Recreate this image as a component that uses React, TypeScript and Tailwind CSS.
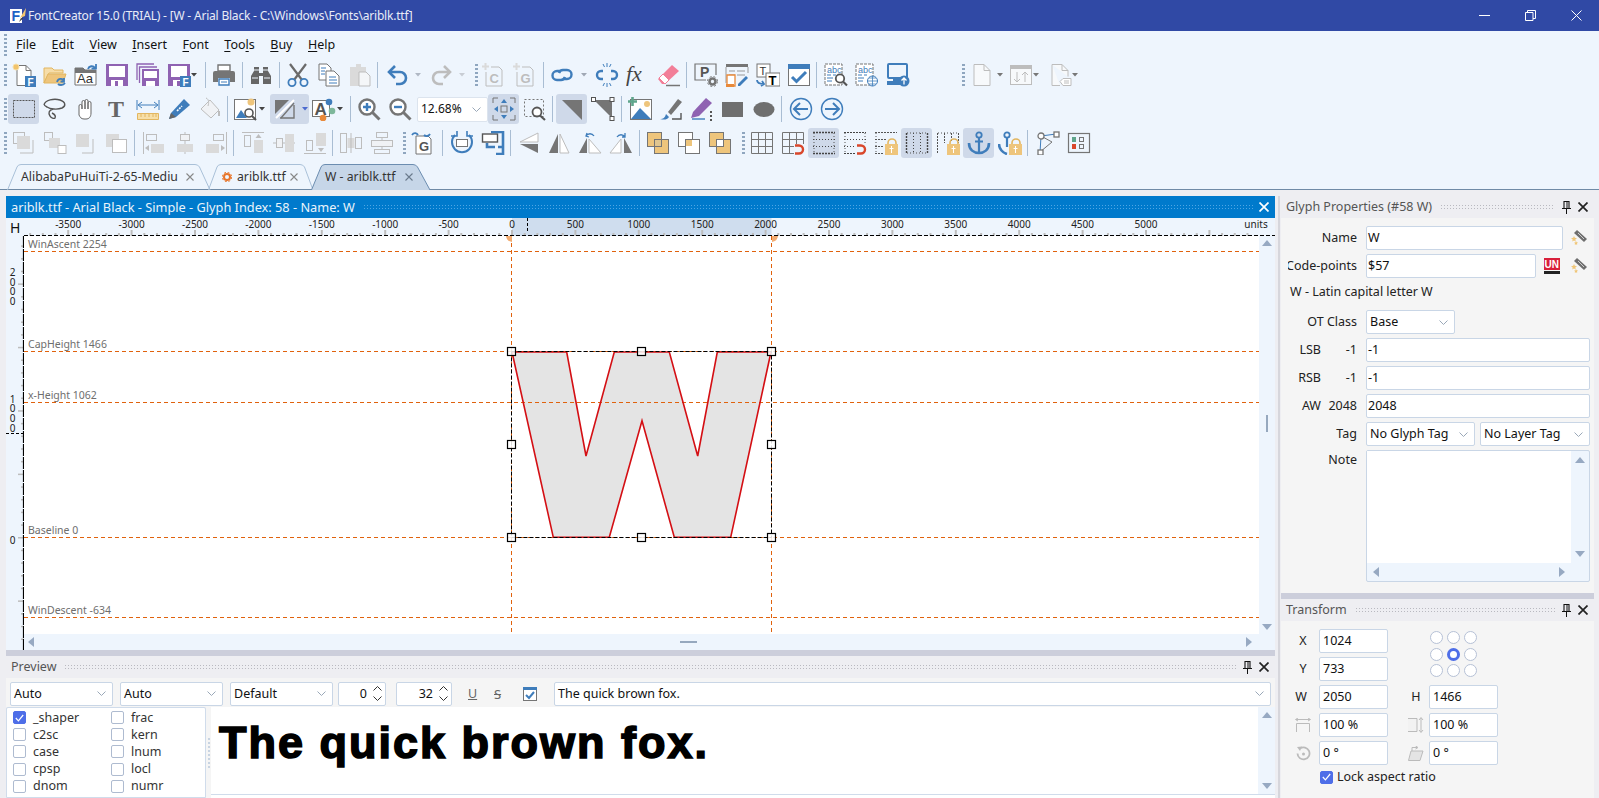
import type { ReactNode } from "react";

const G = "#757575";
const B = "#3F7DBB";
const P = "#8F62B2";
const Y = "#EEC57C";
const D = "#DADADA";
const S = "#BDBDBD";
const RADIOS = [1, 2, 3, 4, 5, 6, 7, 8, 9];

function Ico({ children, w = 24 }: { children: ReactNode; w?: number }) {
  return (
    <svg width={w} height={24} viewBox={`0 0 ${w} 24`} fill="none" className="shrink-0">
      {children}
    </svg>
  );
}

function Btn({ active, children }: { active?: boolean; children: ReactNode }) {
  return (
    <div
      className={`w-[31px] h-[30px] shrink-0 flex items-center justify-center rounded-[3px] ${
        active ? "bg-[#CFD9E9]" : ""
      }`}
    >
      {children}
    </div>
  );
}

function Sep({ className }: { className: string }) {
  return <div className={`w-px h-[26px] shrink-0 bg-[#A9BDD3] ${className}`} />;
}

function Caret({ className = "", color = "#444" }: { className?: string; color?: string }) {
  return (
    <svg width={6} height={4} viewBox="0 0 6 4" className={`shrink-0 ${className}`}>
      <path d="M0 0h6L3 3.5z" fill={color} />
    </svg>
  );
}

function Grip({ className = "" }: { className?: string }) {
  return (
    <div className={`w-[3px] h-[22px] shrink-0 bg-[repeating-linear-gradient(to_bottom,#8FA6BF_0_2px,transparent_2px_4px)] ${className}`} />
  );
}

const txt = { fontFamily: "'Liberation Sans', sans-serif" };

/* row 1 icons */
const NewFont = (
  <Ico>
    <path d="M5 2.5h9l5 5v15H5z" fill="#fff" stroke={G} />
    <path d="M14 2.5v5h5" stroke={G} />
    <circle cx="4" cy="4" r="3" fill="#F1C36C" stroke="#F7DFA8" />
    <rect x="13" y="13" width="11" height="11" fill={B} />
    <text x="15.5" y="22.5" fontSize="10" fontWeight="700" fill="#fff" style={txt}>F</text>
  </Ico>
);
const OpenFolder = (
  <Ico>
    <path d="M1 5h8l2 2h9v3H6L1 20z" fill="#F6DDA9" stroke="#E2B660" />
    <path d="M1 20l4-9h18l-3 9z" fill={Y} stroke="#E2B660" />
    <path d="M14 19c1-4 6-4 7-1M21 15v3.5h-3.5M22 20c-2 3-6 2-7 1" stroke={B} strokeWidth="1.8" />
  </Ico>
);
const AaFolder = (
  <Ico>
    <path d="M1 5h8l2 2h11v15H1z" fill="#fff" stroke={G} />
    <path d="M1 5h8l2 2h11v3H1z" fill={G} />
    <text x="3" y="20" fontSize="13" fill="#333" style={txt}>Aa</text>
    <path d="M14 6c1-3 5-4 7-1M22 1v4.5h-4.5" stroke={B} strokeWidth="1.8" />
  </Ico>
);
const SaveShape = (
  <>
    <rect x="1" y="1" width="22" height="22" fill={P} />
    <rect x="4" y="3" width="16" height="11" fill="#fff" />
    <rect x="6" y="17" width="12" height="6" fill="#fff" />
    <rect x="10" y="18" width="3" height="5" fill={P} />
  </>
);
const Save = <Ico>{SaveShape}</Ico>;
const SaveAll = (
  <Ico>
    <path d="M1 17V1h17M3.5 20V4H21" stroke={P} strokeWidth="1.3" />
    <rect x="6" y="6" width="17" height="17" fill={P} />
    <rect x="8" y="8" width="13" height="7" fill="#fff" />
    <rect x="10" y="18" width="9" height="5" fill="#fff" />
  </Ico>
);
const SaveFont = (
  <Ico>
    {SaveShape}
    <rect x="13" y="13" width="11" height="11" fill={B} />
    <text x="15.5" y="22.5" fontSize="10" fontWeight="700" fill="#fff" style={txt}>F</text>
  </Ico>
);
const Printer = (
  <Ico>
    <path d="M6 2h12v6H6z" fill="#fff" stroke={G} strokeWidth="1.4" />
    <path d="M1 10a2 2 0 0 1 2-2h18a2 2 0 0 1 2 2v9h-5v-4H6v4H1z" fill={G} />
    <path d="M7 16h10v6H7z" fill="#fff" stroke={B} strokeWidth="1.4" />
    <path d="M9 19h6" stroke={B} />
  </Ico>
);
const Binoculars = (
  <Ico>
    <path d="M2 21v-8l3-5V4h5v6h4V4h5v4l3 5v8h-8v-8h-4v8z" fill="#666" />
    <path d="M5 7h5M14 7h5M3 15h6M15 15h6" stroke="#EEF5FD" />
  </Ico>
);
const Cut = (
  <Ico>
    <path d="M4 1l12 16M20 1L8 17" stroke="#6A6A6A" strokeWidth="2.2" />
    <circle cx="6" cy="19.5" r="3.6" stroke={B} strokeWidth="1.8" />
    <circle cx="18" cy="19.5" r="3.6" stroke={B} strokeWidth="1.8" />
  </Ico>
);
const Copy = (
  <Ico>
    <path d="M2 1h8l4 4v12H2z" fill="#fff" stroke={G} />
    <path d="M9 8h8l5 5v10H9z" fill="#fff" stroke={G} />
    <path d="M4 5h5M4 8h4M4 11h4M12 14h7M12 17h8M12 20h8" stroke={B} />
  </Ico>
);
const Paste = (
  <Ico>
    <path d="M2 4h6V1h5v3h5v6h-7v13H2z" fill={D} />
    <path d="M11 9h7l4 4v10H11z" fill="#F4F6F8" stroke={S} />
  </Ico>
);
const Undo = (
  <Ico>
    <path d="M9 3L3 9l6 6" stroke={B} strokeWidth="2.6" />
    <path d="M3 9h11a6 6 0 0 1 6 6v0a6 6 0 0 1-6 6h-4" stroke={B} strokeWidth="2.6" />
  </Ico>
);
const Redo = (
  <Ico>
    <path d="M15 3l6 6-6 6" stroke={S} strokeWidth="2.6" />
    <path d="M21 9H10a6 6 0 0 0-6 6v0a6 6 0 0 0 6 6h4" stroke={S} strokeWidth="2.6" />
  </Ico>
);
const GlyphBox = ({ letter }: { letter: string }) => (
  <Ico>
    <path d="M1 3.5h7M4.5 0v7" stroke={D} strokeWidth="2" />
    <path d="M10 4h8l3 3v16H5V9" stroke={S} />
    <text x="8.5" y="20" fontSize="13" fontWeight="700" fill={S} style={txt}>{letter}</text>
  </Ico>
);
const LinkI = (
  <Ico>
    <path d="M11 8H7a4.5 4.5 0 0 0 0 9h4a4.5 4.5 0 0 0 4-3" stroke={B} strokeWidth="2.4" />
    <path d="M13 16h4a4.5 4.5 0 0 0 0-9h-4a4.5 4.5 0 0 0-4 3" stroke={B} strokeWidth="2.4" />
  </Ico>
);
const Unlink = (
  <Ico>
    <path d="M8 8H6a4 4 0 0 0 0 8h2M16 8h2a4 4 0 0 1 0 8h-2" stroke={B} strokeWidth="2.4" />
    <path d="M8 1l1.5 3M12 0v4M16 1l-1.5 3M8 23l1.5-3M12 24v-4M16 23l-1.5-3" stroke={B} />
  </Ico>
);
const Fx = (
  <Ico>
    <text x="0" y="18" fontSize="22" fontStyle="italic" fill="#444" style={{ fontFamily: "'Liberation Serif', serif" }}>fx</text>
  </Ico>
);
const Eraser = (
  <Ico>
    <path d="M1 16L15 2l7 6-14 13H5z" fill="#F27E98" />
    <path d="M2 15l6 6 4-4-6-6z" fill="#fff" stroke="#F27E98" />
    <path d="M9 22.5h14" stroke={G} strokeWidth="1.5" />
  </Ico>
);
const PGear = (
  <Ico>
    <path d="M12 17H1V1h21v11" stroke={G} strokeWidth="1.2" />
    <text x="6" y="14" fontSize="14" fontWeight="700" fill="#555" style={txt}>P</text>
    <circle cx="18.5" cy="18.5" r="3" stroke={G} strokeWidth="2.6" />
    <circle cx="18.5" cy="18.5" r="5" stroke={G} strokeDasharray="2 2" />
  </Ico>
);
const TableEdit = (
  <Ico>
    <rect x="1" y="1" width="22" height="3" fill={G} />
    <path d="M1 4v16M23 4v6M4 8h6M12 8h8M4 12h6M12 12h8" stroke="#999" />
    <path d="M2 12h8v11H2z" fill="#fff" stroke="#E8893A" strokeWidth="1.3" />
    <path d="M1 21h8v3H1z" fill="#E8893A" />
    <path d="M13 21l8-8 2 2-8 8h-2z" fill={B} />
  </Ico>
);
const TSwap = (
  <Ico>
    <rect x="1" y="1" width="13" height="13" fill="#fff" stroke={G} />
    <text x="3.5" y="12" fontSize="11" fill="#333" style={txt}>T</text>
    <rect x="10" y="10" width="14" height="13" fill="#fff" stroke={G} />
    <text x="12.5" y="21.5" fontSize="13" fontWeight="700" fill="#000" style={txt}>T</text>
    <path d="M1 17c0 3 2 4 7 4M6 18l2 3-3 2" stroke={B} strokeWidth="1.8" />
  </Ico>
);
const CheckWin = (
  <Ico>
    <rect x="1.5" y="1.5" width="21" height="21" fill="#fff" stroke={G} />
    <rect x="1" y="1" width="22" height="5" fill={B} />
    <path d="M5 14l4.5 4.5L19 9" stroke={B} strokeWidth="3" />
  </Ico>
);
const AbcSearch = (
  <Ico>
    <path d="M1 1h17v21H1z" fill="#fff" stroke={G} strokeDasharray="3 1" />
    <text x="3" y="9.5" fontSize="9" fill={B} style={txt}>abc</text>
    <path d="M3 12h4M3 15h6M3 18h5M9 12h3" stroke={B} />
    <circle cx="16" cy="15.5" r="4.2" fill="#fff" stroke="#555" strokeWidth="1.8" />
    <path d="M19 18.5l4 4" stroke="#555" strokeWidth="2.2" />
  </Ico>
);
const AbcGlobe = (
  <Ico>
    <path d="M1 1h17v21H1z" fill="#fff" stroke={G} strokeDasharray="3 1" />
    <text x="3" y="9.5" fontSize="9" fill={B} style={txt}>abc</text>
    <path d="M3 12h4M3 15h6M3 18h5M9 12h3" stroke={B} />
    <circle cx="17.5" cy="18" r="5" fill="#fff" stroke={B} />
    <path d="M12.5 18h10M17.5 13v10M14 15h7M14 21h7" stroke={B} strokeWidth=".8" />
  </Ico>
);
const Monitor = (
  <Ico>
    <rect x="2" y="1" width="19" height="14" rx="1" stroke={B} strokeWidth="2" />
    <path d="M1 18h13v4H1z" fill={B} />
    <path d="M7 15h6v3H7z" fill={B} />
    <circle cx="18" cy="18" r="5.5" fill={B} />
    <path d="M18 21.5V15M15.5 17.5l2.5-2.5 2.5 2.5" stroke="#fff" strokeWidth="1.3" />
  </Ico>
);
const PageD = (
  <Ico>
    <path d="M4 1.5h10l6 6v15H4z" fill="#F7F9FB" stroke={S} />
    <path d="M14 1.5v6h6" stroke={S} />
  </Ico>
);
const UpDown = (
  <Ico>
    <rect x="1.5" y="2.5" width="21" height="19" fill="#F7F9FB" stroke={S} />
    <rect x="1" y="2" width="22" height="4" fill={S} />
    <path d="M8 9v10M5 16l3 3 3-3M16 19V9M13 12l3-3 3 3" stroke={S} />
  </Ico>
);
const PageTag = (
  <Ico>
    <path d="M4 1.5h10l6 6v6M4 1.5v21h8" fill="#F7F9FB" stroke={S} />
    <path d="M14 1.5v6h6" stroke={S} />
    <path d="M12 18.5l3-3h8v7h-8z" fill="#fff" stroke={S} />
    <path d="M16 18h5M16 20h5" stroke={S} />
  </Ico>
);

/* row 2 icons */
const SelectRect = (
  <Ico>
    <rect x="1.5" y="3.5" width="21" height="17" stroke="#555" strokeDasharray="2 1" />
  </Ico>
);
const Lasso = (
  <Ico>
    <path d="M1 8C2 3 11 1 17 3c6 2 6 6 2 8-5 2-12 1-15-1-2-1-3-2-3-3M10 12c-4 1-5 4-3 7 1 2 4 3 5 2 1-2-1-4-3-5" stroke="#555" strokeWidth="1.4" />
  </Ico>
);
const Hand = (
  <Ico>
    <path d="M5 14V9a1.5 1.5 0 0 1 3 0v3V5a1.5 1.5 0 0 1 3 0v7V4a1.5 1.5 0 0 1 3 0v8V6a1.5 1.5 0 0 1 3 0v10c0 4-2 6-5 6H10c-3 0-4-2-5-4z" fill="#fff" stroke="#666" />
  </Ico>
);
const TextT = (
  <Ico>
    <text x="3" y="20" fontSize="24" fontWeight="700" fill="#666" style={{ fontFamily: "'Liberation Serif', serif" }}>T</text>
  </Ico>
);
const Measure = (
  <Ico>
    <path d="M1 3v10M23 3v10" stroke={B} />
    <path d="M3 8h18M6 5L2 8l4 3M18 5l4 3-4 3" stroke={B} />
    <path d="M1.5 16.5h21v6h-21z" fill="#F7DFA8" stroke="#E2B660" />
    <path d="M5 17v3M9 17v3M13 17v3M17 17v3M20 17v3" stroke="#E2B660" />
  </Ico>
);
const Pencil = (
  <Ico>
    <path d="M2 22l2-6L17 2l6 6L9 20z" fill={B} />
    <path d="M2 22l2-6 5 4z" fill="#666" />
    <path d="M10 14l5-5" stroke="#fff" strokeWidth="1.6" strokeDasharray="2 1" />
  </Ico>
);
const Bucket = (
  <Ico>
    <path d="M3 12L12 3l9 10-8 8z" fill="#F0F2F5" stroke={S} />
    <path d="M8 1c3 1 3 5 2 8" stroke={S} />
    <path d="M21 14v5" stroke={S} strokeWidth="2" />
  </Ico>
);
const ImgSearch = (
  <Ico>
    <rect x=".5" y="2.5" width="21" height="20" fill="#fff" stroke={G} />
    <circle cx="17" cy="5" r="3.5" fill={Y} />
    <path d="M2 21l5-8 6 8z" fill={B} />
    <circle cx="15" cy="16" r="4" fill="#fff" stroke="#555" strokeWidth="1.6" />
    <path d="M18 19l4 4" stroke="#555" strokeWidth="2" />
  </Ico>
);
const DiagFill = (
  <Ico>
    <path d="M2 3h14L2 17z" fill={G} />
    <path d="M3 21L21 3" stroke="#fff" strokeWidth="2" />
    <path d="M21 8v13H7" stroke={G} strokeWidth="1.4" />
    <path d="M8 21L21 6" stroke={G} strokeWidth="1.4" />
  </Ico>
);
const ADots = (
  <Ico>
    <rect x=".5" y="3.5" width="17" height="16" fill="#fff" stroke={G} />
    <text x="2.5" y="18" fontSize="17" fontWeight="700" fill="#555" style={txt}>A</text>
    <circle cx="17" cy="5" r="3.3" fill={B} />
    <circle cx="20" cy="14" r="3.3" fill="#7DB79A" />
    <circle cx="11" cy="21" r="3.3" fill="#E8893A" />
  </Ico>
);
const ZoomI = ({ plus }: { plus?: boolean }) => (
  <Ico>
    <circle cx="10" cy="10" r="7.5" fill="#fff" stroke={G} strokeWidth="2.4" />
    <path d="M15.5 15.5l7 7" stroke={G} strokeWidth="3" />
    <path d={plus ? "M6 10h8M10 6v8" : "M6 10h8"} stroke={B} strokeWidth="2.4" />
  </Ico>
);
const ZoomFit = (
  <Ico>
    <path d="M1 6V1h5M18 1h5v5M23 18v5h-5M6 23H1v-5" stroke={G} />
    <rect x="9" y="9" width="6" height="6" stroke={G} />
    <path d="M12 2l3 4H9zM12 22l-3-4h6zM2 12l4-3v6zM22 12l-4 3V9z" fill={B} />
  </Ico>
);
const ZoomSel = (
  <Ico>
    <rect x="1.5" y="2.5" width="19" height="17" stroke="#777" strokeDasharray="2 2" />
    <circle cx="14" cy="15" r="4.5" fill="#fff" stroke="#555" strokeWidth="1.8" />
    <path d="M17 18.5l5 4.5" stroke="#555" strokeWidth="2.2" />
  </Ico>
);
const Tri = (
  <Ico>
    <path d="M2 3h20v20z" fill={G} />
  </Ico>
);
const TriHandles = (
  <Ico>
    <path d="M3 3h18v18z" fill={G} />
    <rect x=".5" y=".5" width="4" height="4" fill="#fff" stroke="#555" />
    <rect x="19" y=".5" width="4" height="4" fill="#fff" stroke="#555" />
    <rect x="19" y="19.5" width="4" height="4" fill="#fff" stroke="#555" />
  </Ico>
);
const ImgPlus = (
  <Ico>
    <rect x="2.5" y="2.5" width="21" height="20" fill="#fff" stroke={G} />
    <path d="M3 22l9-11 11 11z" fill={B} />
    <circle cx="19" cy="7" r="3" fill={Y} />
    <path d="M0 4.5h9M4.5 0v9" stroke="#5FA58B" strokeWidth="2.6" />
  </Ico>
);
const Brush = (
  <Ico>
    <path d="M1 22c3 0 5-1 6-5l3 3c-2 3-5 3-9 2z" fill={B} />
    <path d="M9 15L19 2l4 3-11 13z" fill={G} />
    <path d="M13 22h9v-6" stroke="#555" strokeWidth="1.4" />
  </Ico>
);
const PurplePen = (
  <Ico>
    <path d="M1 21l2-6L16 1l6 5L9 19z" fill={P} />
    <path d="M2 22h13" stroke={B} strokeWidth="1.4" />
    <path d="M20 14h2v2h-2zM20 18h2v2h-2zM20 22h2v2h-2z" fill="#555" />
  </Ico>
);
const RectI = <Ico><rect x="1" y="5" width="21" height="15" fill="#6F6F6F" /></Ico>;
const EllipseI = <Ico><ellipse cx="12" cy="12.5" rx="10.5" ry="7.5" fill="#6F6F6F" /></Ico>;
const CircleArrow = ({ right }: { right?: boolean }) => (
  <Ico>
    <circle cx="12" cy="12" r="10.5" stroke={B} strokeWidth="1.4" />
    <path d={right ? "M5 12h13M13 6l6 6-6 6" : "M19 12H6M11 6l-6 6 6 6"} stroke={B} strokeWidth="2" />
  </Ico>
);

/* row 3 icons */
const Arr1 = <Ico><rect x="1.5" y="1.5" width="11" height="11" stroke={S} /><rect x="5" y="5" width="13" height="13" fill={D} /><path d="M21 9v13H8" stroke={S} /></Ico>;
const Arr2 = <Ico><rect x="1.5" y="1.5" width="8" height="8" stroke={S} /><rect x="6" y="7" width="11" height="10" fill={D} /><rect x="15" y="14.5" width="8" height="8" fill="#fff" stroke={S} /></Ico>;
const Arr3 = <Ico><rect x="2" y="3" width="13" height="13" fill={D} /><path d="M19 8v14H8" stroke={S} /></Ico>;
const Arr4 = <Ico><rect x="1" y="3" width="13" height="13" fill={D} /><rect x="7.5" y="8.5" width="14" height="13" fill="#fff" stroke={S} /></Ico>;
const AlignL = <Ico><path d="M1.5 1v22" stroke={S} /><rect x="4.5" y="3.5" width="10" height="6" stroke={S} /><rect x="9" y="13" width="13" height="9" fill={D} /><path d="M3 17l4-3v6z" fill={S} /></Ico>;
const AlignC = <Ico><path d="M12 1v22" stroke={S} /><rect x="7.5" y="3.5" width="9" height="6" fill="#F0F2F5" stroke={S} /><rect x="4" y="13" width="16" height="8" fill={D} /></Ico>;
const AlignR = <Ico><path d="M22.5 1v22" stroke={S} /><rect x="9.5" y="3.5" width="10" height="6" stroke={S} /><rect x="2" y="13" width="13" height="9" fill={D} /><path d="M21 17l-4-3v6z" fill={S} /></Ico>;
const AlignT = <Ico><path d="M1 1.5h22" stroke={S} /><rect x="3.5" y="4.5" width="6" height="11" stroke={S} /><rect x="13" y="9" width="9" height="13" fill={D} /><path d="M17.5 3l3 4h-6z" fill={S} /></Ico>;
const AlignM = <Ico><path d="M1 12h22" stroke={S} /><rect x="4.5" y="7.5" width="6" height="9" fill="#F0F2F5" stroke={S} /><rect x="13" y="3" width="9" height="18" fill={D} /></Ico>;
const AlignB = <Ico><path d="M1 22.5h22" stroke={S} /><rect x="3.5" y="9.5" width="6" height="10" stroke={S} /><rect x="13" y="2" width="10" height="13" fill={D} /><path d="M18 21l-3-4h6z" fill={S} /></Ico>;
const DistH = <Ico><rect x="1.5" y="2.5" width="6" height="19" stroke={S} /><rect x="8.5" y="7" width="7" height="10" fill={D} /><rect x="16.5" y="6.5" width="6" height="11" stroke={S} /><path d="M12 2v20" stroke={S} /></Ico>;
const DistV = <Ico><rect x="6.5" y="1.5" width="11" height="5" stroke={S} /><rect x="1.5" y="9.5" width="21" height="6" fill="#F0F2F5" stroke={S} /><rect x="4.5" y="18.5" width="15" height="4" stroke={S} /><path d="M12 6v3M12 15v3" stroke={S} /></Ico>;
const GSwap = (
  <Ico>
    <path d="M6 5h12l3 3v15H6z" fill="#fff" stroke={G} />
    <path d="M2 4c2-3 5-2 6 0M14 4c2 2 5 1 6-1" stroke={B} strokeWidth="1.8" />
    <text x="9" y="20" fontSize="13" fontWeight="700" fill="#555" style={txt}>G</text>
  </Ico>
);
const RotateBox = (
  <Ico>
    <path d="M5 4a10 10 0 1 0 14 0" stroke={B} strokeWidth="2" />
    <path d="M1 5h6V0M23 5h-6V0" stroke={B} strokeWidth="1.6" />
    <rect x="6.5" y="8.5" width="11" height="7" fill="#fff" stroke={G} />
  </Ico>
);
const Clamp = (
  <Ico>
    <rect x="1.5" y="3" width="15" height="8" fill="#fff" stroke="#555" strokeWidth="1.4" />
    <path d="M10 1h12v22h-5M17 16h5M6 12v4h8M15 23h7" stroke={B} strokeWidth="2.6" />
  </Ico>
);
const FlipA = <Ico><path d="M22 2L4 11h18z" fill="#fff" stroke={S} /><path d="M22 22L4 13h18z" fill={G} /></Ico>;
const FlipB = <Ico><path d="M11 3v19H2z" fill={G} /><path d="M13 3v19h9z" fill="#fff" stroke={S} /></Ico>;
const FlipC = <Ico><path d="M9 7v15H1z" fill={G} /><path d="M11 8l12 14H11z" fill="#fff" stroke={S} /><path d="M8 5c2-3 6-3 8 0M9 2l-1 3 3 1" stroke={B} strokeWidth="1.3" /></Ico>;
const FlipD = <Ico><path d="M12 8L1 22h11z" fill="#fff" stroke={S} /><path d="M15 7v15h8z" fill={G} /><path d="M8 6c2-3 6-3 8 0M16 2l0 4-3 0" stroke={B} strokeWidth="1.3" /></Ico>;
const Bool = ({ mode }: { mode: number }) => (
  <Ico>
    <rect x="1.5" y="1.5" width="14" height="14" fill={mode === 1 ? "#fff" : Y} stroke={G} />
    <rect x="8.5" y="8.5" width="14" height="14" fill={mode === 1 ? "#fff" : Y} stroke={G} />
    {mode === 1 && <rect x="9" y="9" width="6" height="6" fill={Y} />}
    {mode === 0 && <rect x="8.5" y="8.5" width="7" height="7" fill="#E0C690" stroke={G} />}
    {mode === 2 && <rect x="8.5" y="8.5" width="7" height="7" fill="#fff" stroke={G} />}
  </Ico>
);
const GridLines = "M1.5 1.5h21v21h-21zM8.5 1.5v21M15.5 1.5v21M1.5 8.5h21M1.5 15.5h21";
const Grid = <Ico><path d={GridLines} stroke={G} /></Ico>;
const MagnetRed = (
  <>
    <rect x="13" y="13" width="11" height="11" fill="#EEF5FD" />
    <path d="M14 14.5h4a4 4 0 0 1 0 8h-4" stroke="#D9472B" strokeWidth="2.4" />
  </>
);
const GridMagnet = <Ico><path d={GridLines} stroke={G} />{MagnetRed}</Ico>;
const RowsDash = <Ico><path d="M1 1.5h22M1 22.5h22" stroke="#444" strokeWidth="1.4" strokeDasharray="2 1" /><path d="M1 8.5h22M1 15.5h22" stroke="#444" strokeDasharray="1 2" /><path d="M2 2v20M22 2v20" stroke="#555" strokeDasharray="1 2" /></Ico>;
const RowsMagnet = <Ico><path d="M1 1.5h22M1 22.5h14" stroke="#444" strokeDasharray="2 1" /><path d="M1 8.5h22M1 15.5h14" stroke="#444" strokeDasharray="1 2" /><path d="M2 2v20M22 2v12" stroke="#555" strokeDasharray="1 2" />{MagnetRed}</Ico>;
const Lock = (
  <>
    <path d="M14 14v-2a4 4 0 0 1 8 0v2" stroke="#E2B660" strokeWidth="1.6" />
    <rect x="11" y="13" width="13" height="11" fill={Y} />
    <path d="M17.5 15v7M15.5 17.5h4" stroke="#fff" />
  </>
);
const RowsLock = <Ico><path d="M1 1.5h22M1 8.5h12M1 15.5h9M1 22.5h9" stroke="#555" strokeDasharray="2 1" /><path d="M2 2v20" stroke="#555" strokeDasharray="1 2" />{Lock}</Ico>;
const ColsDash = <Ico><path d="M1.5 2v20M22.5 2v20" stroke="#444" strokeWidth="1.4" strokeDasharray="2 1" /><path d="M8.5 2v20M15.5 2v20" stroke="#444" strokeDasharray="1 2" /><path d="M2 2h20M2 22h20" stroke="#555" strokeDasharray="1 2" /></Ico>;
const ColsLock = <Ico><path d="M1.5 2v20M8.5 2v10M15.5 2v8M22.5 2v10" stroke="#555" strokeDasharray="2 1" /><path d="M2 2h20" stroke="#555" strokeDasharray="1 2" />{Lock}</Ico>;
const Anchor = (
  <Ico>
    <circle cx="12" cy="4" r="2.7" stroke={B} strokeWidth="1.8" />
    <path d="M12 7v15M8 10.5h8" stroke={B} strokeWidth="2.2" />
    <path d="M2 12c0 7 5 10 10 10s10-3 10-10" stroke={B} strokeWidth="2.6" />
  </Ico>
);
const AnchorLock = (
  <Ico>
    <circle cx="9" cy="4" r="2.7" stroke={B} strokeWidth="1.8" />
    <path d="M9 7v9" stroke={B} strokeWidth="2.2" />
    <path d="M1 13c0 5 4 9 8 10" stroke={B} strokeWidth="2.6" />
    {Lock}
  </Ico>
);
const Nodes = (
  <Ico>
    <path d="M5 5l15-2M5 5l-1 17" stroke={B} />
    <path d="M5 5l11 6-12 10" stroke={G} />
    <circle cx="5" cy="5" r="3" fill="#fff" stroke={G} strokeWidth="1.3" />
    <rect x="18" y="1" width="5" height="5" fill="#fff" stroke={G} strokeWidth="1.3" />
    <rect x="2" y="19" width="5" height="5" fill="#fff" stroke={G} strokeWidth="1.3" />
  </Ico>
);
const KernBox = (
  <Ico>
    <rect x="1.5" y="2.5" width="21" height="19" stroke={G} strokeWidth="1.2" />
    <rect x="5" y="6" width="4" height="5" fill="#5FA58B" />
    <rect x="5" y="13" width="4" height="5" fill="#D9472B" />
    <rect x="12.5" y="6.5" width="4" height="4" stroke={G} />
    <rect x="12.5" y="13.5" width="4" height="4" stroke={G} />
  </Ico>
);

const Wand = () => (
  <svg width={16} height={16} viewBox="0 0 16 16" className="shrink-0">
    <path d="M6 0l10 9-3 3L3 3z" fill="#6E6E6E" />
    <path d="M7 3l6 6" stroke="#ccc" />
    <path d="M3 6l.8 1.8L6 8.2 4.3 9.5 4.8 11.5 3 10.4 1.2 11.5 1.7 9.5 0 8.2 2.2 7.8zM5 11l.6 1.3 1.4.2-1 1 .2 1.4L5 14.3 3.8 15l.2-1.4-1-1 1.4-.2z" fill="#F0C678" />
  </svg>
);

const Chevron = ({ color = "#9AA8B8" }: { color?: string }) => (
  <svg width={9} height={5} viewBox="0 0 9 5" className="shrink-0">
    <path d="M.5.5l4 4 4-4" fill="none" stroke={color} />
  </svg>
);

const XIcon = ({ color = "#222", thin }: { color?: string; thin?: boolean }) => (
  <svg width={10} height={10} viewBox="0 0 10 10" className="shrink-0">
    <path d={thin ? "M1.5 1.5l7 7M8.5 1.5l-7 7" : "M.5.5l9 9M9.5.5l-9 9"} stroke={color} strokeWidth={thin ? 1.1 : 1.7} />
  </svg>
);

const Pin = () => (
  <svg width={9} height={13} viewBox="0 0 9 13" className="shrink-0">
    <path d="M2 .5h5v7H2z" fill="none" stroke="#111" strokeWidth="1.1" />
    <path d="M5 1v6" stroke="#111" />
    <path d="M0 7.5h9M4.5 8v5" stroke="#111" />
  </svg>
);

const Tri1 = ({ d }: { d: string }) => (
  <svg width={10} height={10} viewBox="0 0 10 10" className="shrink-0">
    <path d={d} fill="#97A9C2" />
  </svg>
);
const UP = "M5 2l5 6H0z";
const DOWN = "M5 8L0 2h10z";
const LEFT = "M2 5l6-5v10z";
const RIGHT = "M8 5L2 0v10z";

function Dotted({ className, light }: { className: string; light?: boolean }) {
  return (
    <div
      className={`h-[7px] bg-[length:3px_3px] ${
        light
          ? "bg-[radial-gradient(circle,#4FA6E4_1px,transparent_1px)]"
          : "bg-[radial-gradient(circle,#B9B9C0_1px,transparent_1px)]"
      } ${className}`}
    />
  );
}

function Field({ className, tight, children }: { className: string; tight?: boolean; children?: ReactNode }) {
  return (
    <div className={`h-[24px] shrink-0 bg-white border border-[#C9D6E6] rounded-[2px] flex items-center ${tight ? "pl-[1px]" : "pl-[3px]"} text-[#111] overflow-hidden whitespace-nowrap ${className}`}>
      {children}
    </div>
  );
}

function Select({ className, children }: { className: string; children: ReactNode }) {
  return (
    <Field className={`justify-between pr-[6px] ${className}`}>
      <span>{children}</span>
      <Chevron />
    </Field>
  );
}

function CheckBox({ checked }: { checked?: boolean }) {
  return (
    <div className={`w-[13px] h-[13px] rounded-[2px] shrink-0 border flex items-center justify-center ${checked ? "bg-[#4E6EE8] border-[#4E6EE8]" : "bg-white border-[#AEBBD0]"}`}>
      {checked && (
        <svg width={9} height={8} viewBox="0 0 9 8">
          <path d="M.8 4l2.6 2.8L8.2 1" fill="none" stroke="#fff" strokeWidth="1.2" />
        </svg>
      )}
    </div>
  );
}

function PanelHeader({ title, dots }: { title: string; dots: string }) {
  return (
    <div className="h-[22px] flex items-center text-[#555] pl-[5px] pr-[5px] shrink-0">
      <span className="whitespace-nowrap">{title}</span>
      <Dotted className={dots} />
      <div className="ml-auto flex items-center gap-[7px] pr-[1px]">
        <Pin />
        <XIcon />
      </div>
    </div>
  );
}

function TitleBar() {
  return (
    <div className="h-[31px] bg-[#3049A5] flex items-center text-white shrink-0 text-[12px] tracking-[-0.2px]">
      <svg width={18} height={18} viewBox="0 0 18 18" className="ml-[9px] shrink-0">
        <rect x="1" y="2" width="12" height="14" fill="#fff" />
        <text x="2.5" y="14" fontSize="14" fontWeight="700" fill="#1F62C6" style={txt}>F</text>
        <path d="M11 11l6-10-1 8z" fill="#F2C66D" />
        <path d="M10 15l2-4 2 .5z" fill="#333" />
      </svg>
      <span className="ml-[1px] text-[#E8ECF7] whitespace-nowrap">
        FontCreator 15.0 (TRIAL) - [W - Arial Black - C:\Windows\Fonts\ariblk.ttf]
      </span>
      <div className="ml-auto flex items-center">
        <div className="w-[46px] flex justify-center">
          <svg width={11} height={11} viewBox="0 0 11 11"><path d="M0 5.5h11" stroke="#fff" /></svg>
        </div>
        <div className="w-[46px] flex justify-center">
          <svg width={11} height={11} viewBox="0 0 11 11"><path d="M.5 2.5h7.5v8H.5zM2.5 2.5V.5h8v8H8" fill="none" stroke="#fff" /></svg>
        </div>
        <div className="w-[46px] flex justify-center">
          <svg width={11} height={11} viewBox="0 0 11 11"><path d="M.5.5l10 10M10.5.5l-10 10" stroke="#fff" /></svg>
        </div>
      </div>
    </div>
  );
}

const MENUS: [string, string][] = [
  ["F", "ile"], ["E", "dit"], ["V", "iew"], ["I", "nsert"], ["F", "ont"], ["T", "oo"], ["B", "uy"], ["H", "elp"],
];

function MenuBar() {
  return (
    <div className="h-[27px] flex items-center pl-[4px] text-[#111] shrink-0">
      <Grip className="h-[14px] mr-[9px]" />
      <div className="flex gap-[15.5px]">
        {MENUS.map(([u, rest]) => (
          <span key={u + rest}>
            <span className="underline underline-offset-2">{u}</span>
            {rest}
            {rest === "oo" && (
              <>
                <span className="underline underline-offset-2">l</span>s
              </>
            )}
          </span>
        ))}
      </div>
    </div>
  );
}

function Row1() {
  return (
    <div className="h-[34px] flex items-center pl-[4px] shrink-0">
      <Grip className="mr-[1px]" />
      <Btn>{NewFont}</Btn>
      <Btn>{OpenFolder}</Btn>
      <Btn>{AaFolder}</Btn>
      <Btn>{Save}</Btn>
      <Btn>{SaveAll}</Btn>
      <Btn>{SaveFont}</Btn>
      <Caret className="-ml-[3px]" />
      <Sep className="ml-[8px] mr-[2px]" />
      <Btn>{Printer}</Btn>
      <Sep className="ml-[3px] mr-[2px]" />
      <Btn>{Binoculars}</Btn>
      <Sep className="ml-[3px] mr-[2px]" />
      <Btn>{Cut}</Btn>
      <Btn>{Copy}</Btn>
      <Btn>{Paste}</Btn>
      <Sep className="ml-[2px] mr-[4px]" />
      <Btn>{Undo}</Btn>
      <Caret className="ml-[2px]" color="#B0B8C4" />
      <div className="ml-[4px]"><Btn>{Redo}</Btn></div>
      <Caret className="ml-[3px]" color="#C8CDD4" />
      <Grip className="ml-[10px] -mr-[1px]" />
      <Btn><GlyphBox letter="C" /></Btn>
      <Btn><GlyphBox letter="G" /></Btn>
      <Sep className="ml-[4px] mr-[2px]" />
      <Btn>{LinkI}</Btn>
      <Caret className="ml-[4px]" color="#A0A8B4" />
      <div className="ml-[4px]"><Btn>{Unlink}</Btn></div>
      <Btn>{Fx}</Btn>
      <Btn>{Eraser}</Btn>
      <Sep className="ml-[2px] mr-[3px]" />
      <Btn>{PGear}</Btn>
      <Btn>{TableEdit}</Btn>
      <Btn>{TSwap}</Btn>
      <Btn>{CheckWin}</Btn>
      <Sep className="ml-[2px] mr-[3px]" />
      <Btn>{AbcSearch}</Btn>
      <Btn>{AbcGlobe}</Btn>
      <Btn>{Monitor}</Btn>
      <Grip className="ml-[49px] mr-[1px]" />
      <Btn>{PageD}</Btn>
      <Caret color="#777" />
      <div className="ml-[2px]"><Btn>{UpDown}</Btn></div>
      <Caret className="-ml-[3px]" color="#777" />
      <div className="ml-[5px]"><Btn>{PageTag}</Btn></div>
      <Caret className="-ml-[3px]" color="#777" />
    </div>
  );
}

function Row2() {
  return (
    <div className="h-[34px] flex items-center pl-[4px] shrink-0">
      <Grip className="mr-[1px]" />
      <Btn active>{SelectRect}</Btn>
      <Btn>{Lasso}</Btn>
      <Btn>{Hand}</Btn>
      <Btn>{TextT}</Btn>
      <Btn>{Measure}</Btn>
      <Btn>{Pencil}</Btn>
      <Btn>{Bucket}</Btn>
      <Sep className="ml-[2px] mr-[2px]" />
      <Btn>{ImgSearch}</Btn>
      <Caret className="-ml-[2px]" />
      <div className="ml-[5px] w-[39px] h-[30px] rounded-[3px] bg-[#CFD9E9] flex items-center pl-[3px] gap-[5px] shrink-0">
        {DiagFill}
        <Caret color="#4C6BD0" />
      </div>
      <div className="-ml-[1px]"><Btn>{ADots}</Btn></div>
      <Caret className="-ml-[2px]" />
      <Sep className="ml-[7px] mr-[2px]" />
      <Btn><ZoomI plus /></Btn>
      <Btn><ZoomI /></Btn>
      <Field className="ml-[2px] w-[71px] !h-[25px] justify-between pr-[6px] !border-[#DCE4EE] text-[12px]">
        <span>12.68%</span>
        <Chevron />
      </Field>
      <Btn active>{ZoomFit}</Btn>
      <Btn>{ZoomSel}</Btn>
      <Sep className="ml-[2px] mr-[3px]" />
      <Btn active>{Tri}</Btn>
      <Btn>{TriHandles}</Btn>
      <Sep className="ml-[3px] mr-[2px]" />
      <Btn>{ImgPlus}</Btn>
      <Btn>{Brush}</Btn>
      <Btn>{PurplePen}</Btn>
      <Btn>{RectI}</Btn>
      <Btn>{EllipseI}</Btn>
      <Sep className="ml-[2px] mr-[3px]" />
      <Btn><CircleArrow /></Btn>
      <Btn><CircleArrow right /></Btn>
    </div>
  );
}

function Row3() {
  return (
    <div className="h-[34px] flex items-center pl-[4px] shrink-0">
      <Grip className="mr-[1px]" />
      <Btn>{Arr1}</Btn>
      <Btn>{Arr2}</Btn>
      <Btn>{Arr3}</Btn>
      <Btn>{Arr4}</Btn>
      <Sep className="ml-[2px] mr-[3px]" />
      <Btn>{AlignL}</Btn>
      <Btn>{AlignC}</Btn>
      <Btn>{AlignR}</Btn>
      <Sep className="ml-[2px] mr-[3px]" />
      <Btn>{AlignT}</Btn>
      <Btn>{AlignM}</Btn>
      <Btn>{AlignB}</Btn>
      <Sep className="ml-[2px] mr-[2px]" />
      <Btn>{DistH}</Btn>
      <Btn>{DistV}</Btn>
      <Grip className="ml-[6px]" />
      <Btn>{GSwap}</Btn>
      <Sep className="ml-[5px] mr-[3px]" />
      <Btn>{RotateBox}</Btn>
      <Btn>{Clamp}</Btn>
      <Sep className="ml-[2px] mr-[1px]" />
      <Btn>{FlipA}</Btn>
      <Btn>{FlipB}</Btn>
      <Btn>{FlipC}</Btn>
      <Btn>{FlipD}</Btn>
      <Sep className="ml-[3px] mr-[2px]" />
      <Btn><Bool mode={0} /></Btn>
      <Btn><Bool mode={1} /></Btn>
      <Btn><Bool mode={2} /></Btn>
      <Grip className="ml-[7px] mr-[1px]" />
      <Btn>{Grid}</Btn>
      <Btn>{GridMagnet}</Btn>
      <Btn active>{RowsDash}</Btn>
      <Btn>{RowsMagnet}</Btn>
      <Btn>{RowsLock}</Btn>
      <Btn active>{ColsDash}</Btn>
      <Btn>{ColsLock}</Btn>
      <Btn active>{Anchor}</Btn>
      <Btn>{AnchorLock}</Btn>
      <Sep className="ml-[2px] mr-[4px]" />
      <Btn>{Nodes}</Btn>
      <Btn>{KernBox}</Btn>
    </div>
  );
}

function Tab({
  width,
  path,
  active,
  className,
  children,
}: {
  width: number;
  path: string;
  active?: boolean;
  className: string;
  children: ReactNode;
}) {
  return (
    <div className={`relative h-[26px] shrink-0 flex items-center ${className}`}>
      <svg width={width} height={26} viewBox={`0 0 ${width} 26`} className="absolute left-0 top-0">
        <path d={path} fill={active ? "#C6D6E8" : "none"} stroke={active ? "#6C8DB0" : "#A9C0D8"} />
      </svg>
      <div className="relative flex items-center w-full">{children}</div>
    </div>
  );
}

function Tabs() {
  return (
    <div className="h-[30px] pt-[4px] pl-[7px] flex border-b border-[#6F8AA6] shrink-0 text-[#333] text-[12.25px]">
      <Tab width={204} className="w-[204px]" path="M.5 26L10 3Q11 .5 14 .5H188Q191 .5 192.5 3L203 26">
        <span className="ml-[14px] w-[159px] whitespace-nowrap">AlibabaPuHuiTi-2-65-Mediu</span>
        <span className="ml-[5px]"><XIcon color="#888" thin /></span>
      </Tab>
      <Tab width={106} className="w-[106px] -ml-[3px]" path="M.5 26L9 3Q10 .5 13 .5H92Q95 .5 96.5 3L105 26">
        <svg width={10} height={10} viewBox="0 0 10 10" className="ml-[14px] shrink-0">
          <circle cx="5" cy="5" r="3" fill="none" stroke="#E8752A" strokeWidth="2" />
          <circle cx="5" cy="5" r="4.7" fill="none" stroke="#E8752A" strokeDasharray="2 1.7" />
        </svg>
        <span className="ml-[5px] w-[50px] whitespace-nowrap">ariblk.ttf</span>
        <span className="ml-[2px]"><XIcon color="#888" thin /></span>
      </Tab>
      <Tab width={120} active className="w-[120px] -ml-[3px]" path="M.5 26L10 3Q11 .5 14 .5H102Q105 .5 106.5 3L119 26">
        <span className="ml-[14px] w-[76px] whitespace-nowrap">W - ariblk.ttf</span>
        <span className="ml-[3px]"><XIcon color="#6A7A8C" thin /></span>
      </Tab>
    </div>
  );
}

const UNIT = 0.1268;
const ORIGIN_X = 512;
const BASE_Y = 537.5;
const TOP_LABELS = [-3500, -3000, -2500, -2000, -1500, -1000, -500, 0, 500, 1000, 1500, 2000, 2500, 3000, 3500, 4000, 4500, 5000];
const RULER_FONT = { fontFamily: "'Noto Sans', sans-serif" };

function TopRuler() {
  const ticks: number[] = [];
  for (let u = -3900; u <= 5800; u += 100) ticks.push(u);
  return (
    <svg width={1251} height={18} viewBox="24 218 1251 18" className="block shrink-0">
      <rect x="512" y="218" width="259.5" height="18" fill="#CFDDEE" />
      {ticks.map((u) => {
        const x = ORIGIN_X + u * UNIT;
        const long = u % 500 === 0;
        return <rect key={u} x={x - 1} y={long ? 230 : 233} width="2" height={long ? 6 : 3} fill="#BDBDBD" />;
      })}
      <path d="M527.5 218v14" stroke="#000" strokeDasharray="3 2" />
      {TOP_LABELS.map((u) => (
        <text key={u} x={ORIGIN_X + u * UNIT} y="228" textAnchor="middle" fontSize="10" fill="#222" style={RULER_FONT}>
          {u}
        </text>
      ))}
      <text x="1256" y="228" textAnchor="middle" fontSize="10" fill="#222" style={RULER_FONT}>units</text>
      <path d="M24 235.5H1275" stroke="#000" strokeDasharray="4 2" />
    </svg>
  );
}

function StackedDigits({ value, top }: { value: string; top: number }) {
  return (
    <text fontSize="10" fill="#222" textAnchor="middle" style={RULER_FONT}>
      {value.split("").map((c, i) => (
        <tspan key={i} x="12.5" y={top + i * 9.6 + 3.5}>
          {c}
        </tspan>
      ))}
    </text>
  );
}

function LeftRuler() {
  const ticks: number[] = [];
  for (let u = -900; u <= 2300; u += 100) ticks.push(u);
  return (
    <svg width={18} height={414} viewBox="6 236 18 414" className="block shrink-0">
      {ticks.map((u) => {
        const y = BASE_Y - u * UNIT;
        const long = u % 500 === 0;
        return <rect key={u} x={long ? 18 : 21} y={y - 0.5} width={long ? 6 : 3} height="1.5" fill="#BDBDBD" />;
      })}
      <path d="M6 433.5h17" stroke="#000" strokeDasharray="3 2" />
      <StackedDigits value="2000" top={272.7} />
      <StackedDigits value="1000" top={399.3} />
      <StackedDigits value="0" top={540.7} />
      <path d="M23.5 236V650" stroke="#000" strokeDasharray="12 1" strokeWidth="1.2" />
    </svg>
  );
}

const GUIDES: [string, number, number][] = [
  ["WinAscent 2254", 251.5, 244],
  ["CapHeight 1466", 351.5, 344],
  ["x-Height 1062", 402.5, 395],
  ["Baseline 0", 537.5, 530],
  ["WinDescent -634", 617.5, 610],
];

const GLYPH = "M512 352h54.7L586 456l28.3-104h55l28.4 104 19.6-104H771l-40.3 185.3h-56.4L642 420.7l-32.7 116.6h-56z";

function Canvas() {
  const handles = [
    [511.5, 351.5], [641.5, 351.5], [771.5, 351.5],
    [511.5, 444.5], [771.5, 444.5],
    [511.5, 537.5], [641.5, 537.5], [771.5, 537.5],
  ];
  return (
    <svg width={1235} height={398} viewBox="24 236 1235 398" className="block shrink-0 bg-white">
      <path d={GLYPH} fill="#E4E4E4" />
      {GUIDES.map(([, y]) => (
        <path key={y} d={`M24 ${y}H1259`} stroke="#E0620D" strokeDasharray="4 3" />
      ))}
      <path d="M511.5 236V634M771.5 236V634" stroke="#E0620D" strokeDasharray="4 3" />
      <path d="M506 236h6v6a7 7 0 0 1-6-6zM772 242v-6h6a7 7 0 0 1-6 6z" fill="#F2AC72" />
      <path d={GLYPH} fill="none" stroke="#D40F14" strokeWidth="1.6" />
      <rect x="511.5" y="351.5" width="260" height="186" fill="none" stroke="#000" strokeDasharray="4 2" />
      {handles.map(([x, y]) => (
        <rect key={`${x}-${y}`} x={x - 4} y={y - 4} width="8" height="8" fill="#fff" fillOpacity=".85" stroke="#000" strokeWidth="1.2" />
      ))}
      {GUIDES.map(([label, , y]) => (
        <text key={label} x="28" y={y + 4} fontSize="10.5" fill="#6E6E6E" style={RULER_FONT}>
          {label}
        </text>
      ))}
    </svg>
  );
}

function DocWindow() {
  return (
    <div className="h-[454px] flex flex-col shrink-0">
      <div className="h-[22px] bg-[#007ACC] text-white flex items-center pl-[5px] pr-[6px] shrink-0 text-[12.75px]">
        <span className="whitespace-nowrap text-[#EAF4FB]">ariblk.ttf - Arial Black - Simple - Glyph Index: 58 - Name: W</span>
        <Dotted light className="ml-[8px] flex-1 mr-[6px]" />
        <XIcon color="#fff" />
      </div>
      <div className="h-[18px] flex bg-[#EEF5FD] shrink-0">
        <div className="w-[18px] pl-[4px] leading-[20px] text-[#111] text-[14px]">H</div>
        <TopRuler />
      </div>
      <div className="flex bg-[#EEF5FD] h-[414px]">
        <LeftRuler />
        <div className="flex flex-col">
          <div className="flex h-[398px]">
            <Canvas />
            <div className="w-[16px] flex flex-col items-center justify-between py-[2px]">
              <Tri1 d={UP} />
              <div className="w-[2px] h-[17px] bg-[#96A8BE] -mt-[24px]" />
              <Tri1 d={DOWN} />
            </div>
          </div>
          <div className="h-[16px] flex items-center justify-between pl-[2px] pr-[21px] w-[1251px]">
            <Tri1 d={LEFT} />
            <div className="w-[17px] h-[2px] bg-[#96A8BE] ml-[96px]" />
            <Tri1 d={RIGHT} />
          </div>
        </div>
      </div>
    </div>
  );
}

const FEATURES: [string, boolean, string][] = [
  ["_shaper", true, "frac"],
  ["c2sc", false, "kern"],
  ["case", false, "lnum"],
  ["cpsp", false, "locl"],
  ["dnom", false, "numr"],
];

function Spinner({ className, value }: { className: string; value: string }) {
  return (
    <Field className={`justify-end pr-[3px] ${className}`}>
      <span>{value}</span>
      <div className="ml-[6px] flex flex-col gap-[5px]">
        <svg width={9} height={5} viewBox="0 0 9 5"><path d="M.5 4.5l4-4 4 4" fill="none" stroke="#333" /></svg>
        <Chevron color="#333" />
      </div>
    </Field>
  );
}

function PreviewPanel() {
  return (
    <div className="flex-1 flex flex-col min-h-0">
      <div className="h-[6px] bg-[#CCCEDB] shrink-0" />
      <PanelHeader title="Preview" dots="ml-[8px] w-[1173px]" />
      <div className="h-[29px] bg-[#F5F5F5] flex items-center pl-[4px] pr-[4px] shrink-0 pt-[2px]">
        <Select className="w-[103px]">Auto</Select>
        <Select className="w-[103px] ml-[7px]">Auto</Select>
        <Select className="w-[103px] ml-[7px]">Default</Select>
        <Spinner className="w-[48px] ml-[5px]" value="0" />
        <Spinner className="w-[56px] ml-[10px]" value="32" />
        <span className="ml-[16px] w-[8px] underline text-[#666]">U</span>
        <span className="ml-[18px] w-[8px] line-through text-[#666] text-[13px]">S</span>
        <svg width={14} height={14} viewBox="0 0 14 14" className="ml-[21px] shrink-0">
          <rect x=".5" y=".5" width="13" height="13" fill="#fff" stroke={G} />
          <rect x="0" y="0" width="14" height="3" fill={B} />
          <path d="M3 8l3 3 5-6" fill="none" stroke={B} strokeWidth="2" />
        </svg>
        <Select className="ml-[17px] flex-1">The quick brown fox.</Select>
      </div>
      <div className="flex-1 flex min-h-0">
        <div className="w-[200px] bg-white border border-[#D0DCEB] rounded-t-[2px] pl-[6px] pt-[1px] shrink-0 overflow-hidden text-[#333]">
          {FEATURES.map(([a, checked, b]) => (
            <div key={a} className="h-[17.2px] flex items-center">
              <CheckBox checked={checked} />
              <span className="ml-[7px] w-[78px]">{a}</span>
              <CheckBox />
              <span className="ml-[7px]">{b}</span>
            </div>
          ))}
        </div>
        <div className="w-[5px] flex items-center justify-center bg-[#F5F5F5] shrink-0">
          <div className="w-[2px] h-[30px] bg-[repeating-linear-gradient(to_bottom,#C8D4E2_0_2px,transparent_2px_4px)]" />
        </div>
        <div className="flex-1 flex flex-col min-w-0 bg-white">
          <div className="flex flex-1 min-h-0">
            <div className="flex-1 bg-white pl-[8px] pt-[9px] font-['Liberation_Sans',sans-serif] font-bold text-[45px] leading-[54px] text-black [-webkit-text-stroke:1.6px_black] tracking-[2px] whitespace-nowrap overflow-hidden">
              The quick brown fox.
            </div>
            <div className="w-[17px] bg-[#EEF5FD] flex flex-col items-center justify-between pt-[3px] pb-[3px]">
              <Tri1 d={UP} />
              <Tri1 d={DOWN} />
            </div>
          </div>
          <div className="h-[4px] border-t border-[#D0DCEB] bg-white shrink-0" />
        </div>
      </div>
    </div>
  );
}

function GlyphProps() {
  return (
    <div className="h-[397px] flex flex-col shrink-0">
      <PanelHeader title="Glyph Properties (#58 W)" dots="ml-[8px] w-[115px]" />
      <div className="flex-1 bg-[#F5F5F5] flex flex-col gap-[4px] pt-[8px] text-[#222]">
        <div className="flex items-center">
          <span className="ml-[7px] w-[69px] text-right">Name</span>
          <Field tight className="ml-[9px] w-[197px]">W</Field>
          <span className="ml-[8px]"><Wand /></span>
        </div>
        <div className="flex items-center">
          <span className="ml-[7px] w-[69px] flex justify-end overflow-hidden whitespace-nowrap"><span>Code-points</span></span>
          <Field tight className="ml-[9px] w-[170px]">$57</Field>
          <svg width={16} height={16} viewBox="0 0 16 16" className="ml-[8px] shrink-0">
            <rect x="0" y="0" width="16" height="12" fill="#D8203A" />
            <text x=".5" y="10" fontSize="10" fontWeight="700" fill="#fff" style={txt}>UN</text>
            <rect x="0" y="13" width="16" height="3" fill="#222" />
          </svg>
          <span className="ml-[11px]"><Wand /></span>
        </div>
        <div className="h-[24px] pl-[9px] pb-[4px] flex items-center">W - Latin capital letter W</div>
        <div className="flex items-center">
          <span className="ml-[7px] w-[69px] text-right">OT Class</span>
          <Select className="ml-[9px] w-[89px]">Base</Select>
        </div>
        {[
          ["LSB", "-1"],
          ["RSB", "-1"],
          ["AW", "2048"],
        ].map(([l, v]) => (
          <div key={l} className="flex items-center">
            <span className="ml-[7px] w-[33px] text-right">{l}</span>
            <span className="w-[36px] text-right">{v}</span>
            <Field tight className="ml-[9px] w-[224px]">{v}</Field>
          </div>
        ))}
        <div className="flex items-center">
          <span className="ml-[7px] w-[69px] text-right">Tag</span>
          <Select className="ml-[9px] w-[109px]">No Glyph Tag</Select>
          <Select className="ml-[5px] w-[110px]">No Layer Tag</Select>
        </div>
        <div className="flex">
          <span className="ml-[7px] w-[69px] text-right pt-[2px]">Note</span>
          <div className="ml-[9px] w-[224px] h-[132px] bg-[#EEF5FD] border border-[#C9D6E6] rounded-[2px] flex flex-col">
            <div className="flex flex-1">
              <div className="flex-1 bg-white" />
              <div className="w-[18px] flex flex-col items-center justify-between py-[4px]">
                <Tri1 d={UP} />
                <Tri1 d={DOWN} />
              </div>
            </div>
            <div className="h-[18px] flex items-center justify-between pl-[4px] pr-[22px]">
              <Tri1 d={LEFT} />
              <Tri1 d={RIGHT} />
            </div>
          </div>
        </div>
      </div>
    </div>
  );
}

const Radio = ({ on }: { on?: boolean }) => (
  <div className={`w-[13px] h-[13px] rounded-full bg-white ${on ? "border-[3.5px] border-[#4E6EE8]" : "border border-[#B6C1D6]"}`} />
);

const ScaleW = (
  <svg width={16} height={14} viewBox="0 0 16 14" className="shrink-0">
    <path d="M1 1.5h14M3 0L.5 1.5 3 3M13 0l2.5 1.5L13 3" stroke="#BBB" fill="none" />
    <path d="M1.5 14V5.5h13V14" stroke="#BBB" fill="none" />
  </svg>
);
const ScaleH = (
  <svg width={16} height={16} viewBox="0 0 16 16" className="shrink-0">
    <path d="M0 1.5h9v13H0" stroke="#BBB" fill="#F2F2F2" />
    <path d="M13 1v14M11 3l2-2.5L15 3M11 13l2 2.5 2-2.5" stroke="#BBB" fill="none" />
  </svg>
);
const RotateI = (
  <svg width={15} height={15} viewBox="0 0 15 15" className="shrink-0">
    <path d="M4 2.5a6 6 0 1 1-2.5 5" stroke="#BBB" strokeWidth="1.8" fill="none" />
    <path d="M1 1l5-.5L4 5z" fill="#BBB" />
    <circle cx="7.5" cy="8" r="1.5" fill="#BBB" />
  </svg>
);
const SkewI = (
  <svg width={16} height={15} viewBox="0 0 16 15" className="shrink-0">
    <path d="M3 5h12l-3 9.5H.5z" fill="#E4E4E4" stroke="#BBB" />
    <path d="M4 5V1.5h5M7.5 0L10 1.5 7.5 3" stroke="#BBB" fill="none" />
  </svg>
);

function TransformPanel() {
  return (
    <div className="flex-1 flex flex-col min-h-0">
      <div className="h-[6px] bg-[#CCCEDB] shrink-0" />
      <PanelHeader title="Transform" dots="ml-[8px] w-[201px]" />
      <div className="flex-1 bg-[#F5F5F5] pt-[8px] pl-[13px] text-[#222] flex flex-col gap-[4px]">
        <div className="flex">
          <div className="flex flex-col gap-[4px]">
            <div className="flex items-center">
              <span className="w-[18px] text-center">X</span>
              <Field className="ml-[7px] w-[69px]">1024</Field>
            </div>
            <div className="flex items-center">
              <span className="w-[18px] text-center">Y</span>
              <Field className="ml-[7px] w-[69px]">733</Field>
            </div>
          </div>
          <div className="ml-[42px] grid grid-cols-3 content-start gap-x-[4px] gap-y-[3.5px] h-[52px] pt-[2px]">
            {RADIOS.map((n) => (
              <Radio key={n} on={n === 5} />
            ))}
          </div>
        </div>
        <div className="flex items-center">
          <span className="w-[18px] text-center -ml-[2px] mr-[2px]">W</span>
          <Field className="ml-[7px] w-[69px]">2050</Field>
          <span className="ml-[19px] w-[18px] text-center">H</span>
          <Field className="ml-[4px] w-[69px]">1466</Field>
        </div>
        <div className="flex items-center">
          <span className="w-[18px] flex justify-center">{ScaleW}</span>
          <Field className="ml-[7px] w-[69px]">100 %</Field>
          <span className="ml-[19px] w-[18px] flex justify-center">{ScaleH}</span>
          <Field className="ml-[4px] w-[69px]">100 %</Field>
        </div>
        <div className="flex items-center">
          <span className="w-[18px] flex justify-center">{RotateI}</span>
          <Field className="ml-[7px] w-[69px]">0 °</Field>
          <span className="ml-[19px] w-[18px] flex justify-center">{SkewI}</span>
          <Field className="ml-[4px] w-[69px]">0 °</Field>
        </div>
        <div className="flex items-center pl-[26px]">
          <CheckBox checked />
          <span className="ml-[4px]">Lock aspect ratio</span>
        </div>
      </div>
    </div>
  );
}

export default function App() {
  return (
    <div className="w-[1599px] h-[798px] overflow-hidden flex flex-col bg-[#EEEEF2] font-['Noto_Sans',sans-serif] text-[12.5px] leading-[16px]">
      <TitleBar />
      <div className="bg-[#EEF5FD] flex flex-col shrink-0">
        <MenuBar />
        <Row1 />
        <Row2 />
        <Row3 />
        <Tabs />
      </div>
      <div className="flex-1 flex min-h-0 pt-[6px] pl-[6px]">
        <div className="w-[1269px] flex flex-col shrink-0">
          <DocWindow />
          <PreviewPanel />
        </div>
        <div className="w-[6px] flex justify-center shrink-0">
          <div className="w-[2px] ml-[2px] bg-[#D6D6DC]" />
        </div>
        <div className="w-[313px] flex flex-col shrink-0">
          <GlyphProps />
          <TransformPanel />
        </div>
      </div>
    </div>
  );
}
